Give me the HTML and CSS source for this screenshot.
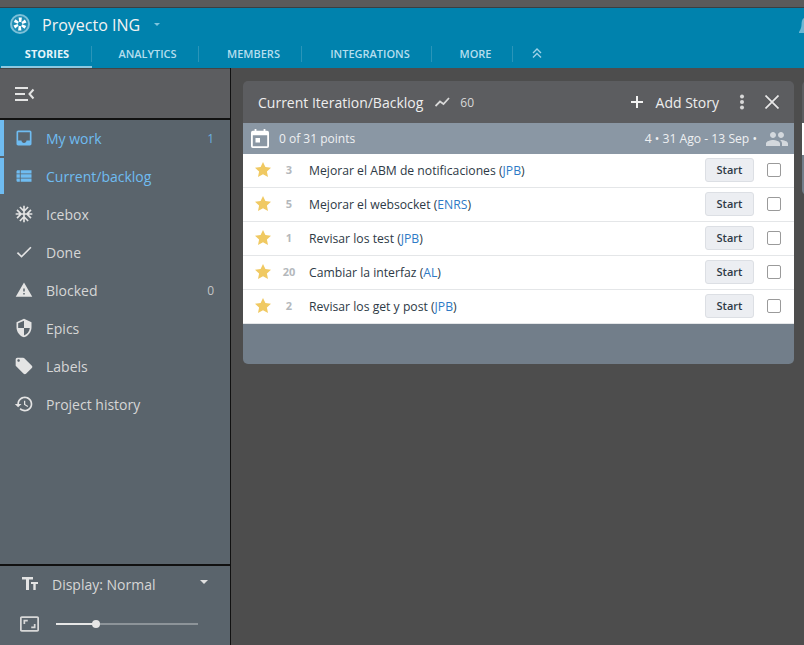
FILE: index.html
```html
<!DOCTYPE html>
<html lang="es">
<head>
<meta charset="utf-8">
<title>Proyecto ING</title>
<link rel="stylesheet" href="styles.css">
</head>
<body>
<div class="topstrip"></div>
<header class="header">
  <div class="project">
    <svg class="logo" width="20" height="20" viewBox="0 0 20 20">
      <circle cx="10" cy="10" r="9" fill="#1d8db4" stroke="#7cc0d8" stroke-width="2"/>
      <g fill="#fff">
        <path d="M8.600 3.600h3.300l-.6 4.300H9.200z"/>
        <path d="M8.600 3.600h3.300l-.6 4.300H9.200z" transform="rotate(60 10 10)"/>
        <path d="M8.600 3.600h3.300l-.6 4.300H9.200z" transform="rotate(120 10 10)"/>
        <path d="M8.600 3.600h3.300l-.6 4.300H9.200z" transform="rotate(180 10 10)"/>
        <path d="M8.600 3.600h3.300l-.6 4.300H9.200z" transform="rotate(240 10 10)"/>
        <path d="M8.600 3.600h3.300l-.6 4.300H9.200z" transform="rotate(300 10 10)"/>
      </g>
    </svg>
    <span class="project-name">Proyecto ING</span>
    <span class="caret-small"></span>
    <svg class="bell" width="5" height="15" viewBox="0 0 5 15"><path d="M5 0C3 1 2.500 4 2.500 7S1 12 0 14v1h5z" fill="#6db7d3"/></svg>
  </div>
  <nav class="tabs">
    <a class="tab tab-stories">STORIES</a>
    <a class="tab tab-analytics">ANALYTICS</a>
    <a class="tab tab-members">MEMBERS</a>
    <a class="tab tab-integrations">INTEGRATIONS</a>
    <a class="tab tab-more">MORE</a>
    <a class="tab tab-up"><svg width="10" height="10" viewBox="0 0 10 10" fill="none" stroke="#9fd3e8" stroke-width="1.400"><path d="M1 5l4-4 4 4M1 9.500l4-4 4 4"/></svg></a>
  </nav>
</header>
<div class="body">
  <aside class="sidebar">
    <div class="side-top">
      <svg width="20" height="14" viewBox="0 0 20 14" fill="#e4e4e4"><path d="M0 0h13v2H0zM0 6h10v2H0zM0 12h13v2H0z"/><path d="M18.500 2.500L14.500 7l4 4.500" fill="none" stroke="#e4e4e4" stroke-width="2"/></svg>
    </div>
    <ul class="menu">
      <li class="item active">
        <svg class="ic" viewBox="0 0 24 24"><path d="M19 3H4.990c-1.110 0-1.980.89-1.980 2L3 19c0 1.100.88 2 1.990 2H19c1.100 0 2-.9 2-2V5c0-1.110-.9-2-2-2zm0 12h-4c0 1.660-1.350 3-3 3s-3-1.340-3-3H4.990V5H19v10z"/></svg>
        <span class="label">My work</span><span class="count">1</span>
      </li>
      <li class="item active">
        <svg class="ic" viewBox="0 0 24 24"><path d="M3 6.500C3 5.700 3.700 5 4.500 5H7v4H3zM8 5h13v4H8zM3 10h4v4H3zM8 10h13v4H8zM3 15h4v4H4.500C3.700 19 3 18.300 3 17.500zM8 15h13v4H8z"/></svg>
        <span class="label">Current/backlog</span>
      </li>
      <li class="item">
        <svg class="ic" viewBox="0 0 24 24"><path d="M22 11h-4.170l3.240-3.240-1.410-1.420L15 11h-2V9l4.660-4.660-1.420-1.410L13 6.170V2h-2v4.170L7.760 2.930 6.340 4.340 11 9v2H9L4.340 6.340 2.930 7.760 6.170 11H2v2h4.170l-3.240 3.240 1.410 1.420L9 13h2v2l-4.660 4.660 1.420 1.410L11 17.830V22h2v-4.170l3.240 3.240 1.420-1.410L13 15v-2h2l4.660 4.660 1.410-1.420L17.830 13H22z"/></svg>
        <span class="label">Icebox</span>
      </li>
      <li class="item">
        <svg class="ic" viewBox="0 0 24 24"><path d="M9 16.170L4.830 12l-1.420 1.410L9 19 21 7l-1.410-1.410z"/></svg>
        <span class="label">Done</span>
      </li>
      <li class="item">
        <svg class="ic" viewBox="-1.300 -1.300 26.600 26.600"><path d="M1 21h22L12 2 1 21zm12-3h-2v-2h2v2zm0-4h-2v-4h2v4z"/></svg>
        <span class="label">Blocked</span><span class="count">0</span>
      </li>
      <li class="item">
        <svg class="ic" viewBox="0 0 24 24"><path d="M12 1L3 5v6c0 5.550 3.840 10.740 9 12 5.160-1.260 9-6.450 9-12V5l-9-4zm0 10.990h7c-.53 4.120-3.280 7.790-7 8.940V12H5V6.300l7-3.110v8.800z"/></svg>
        <span class="label">Epics</span>
      </li>
      <li class="item">
        <svg class="ic" viewBox="0 0 24 24"><path d="M21.410 11.580l-9-9C12.050 2.220 11.550 2 11 2H4c-1.100 0-2 .9-2 2v7c0 .55.22 1.050.59 1.420l9 9c.36.36.86.58 1.410.58.55 0 1.050-.22 1.410-.59l7-7c.37-.36.59-.86.59-1.410 0-.55-.23-1.060-.59-1.420zM5.500 7C4.670 7 4 6.330 4 5.500S4.670 4 5.500 4 7 4.670 7 5.500 6.330 7 5.500 7z"/></svg>
        <span class="label">Labels</span>
      </li>
      <li class="item">
        <svg class="ic" viewBox="0 0 24 24"><path d="M13 3c-4.970 0-9 4.030-9 9H1l3.890 3.890.07.14L9 12H6c0-3.870 3.130-7 7-7s7 3.130 7 7-3.130 7-7 7c-1.930 0-3.680-.79-4.940-2.060l-1.420 1.420C8.270 19.990 10.510 21 13 21c4.970 0 9-4.030 9-9s-4.030-9-9-9zm-1 5v5l4.280 2.540.72-1.210-3.500-2.080V8H12z"/></svg>
        <span class="label">Project history</span>
      </li>
    </ul>
    <div class="side-bottom">
      <div class="display-row">
        <span class="tt"><svg width="16" height="13" viewBox="0 0 16 13"><path d="M0 0h11v2.600H7V13H4V2.600H0zM9 5h7v2h-2.300v6h-2.400V7H9z"/></svg></span>
        <span class="display-label">Display: Normal</span>
        <span class="caret"></span>
      </div>
      <div class="zoom-row">
        <svg class="zoom-ic" width="19" height="16" viewBox="1 3 22 18"><path d="M19 12h-2v3h-3v2h5v-5zM7 9h3V7H5v5h2V9zm14-6H3c-1.100 0-2 .9-2 2v14c0 1.100.9 2 2 2h18c1.100 0 2-.9 2-2V5c0-1.100-.9-2-2-2zm0 16.010H3V4.990h18v14.020z"/></svg>
        <div class="slider"><span class="slider-fill"></span><span class="slider-thumb"></span></div>
      </div>
    </div>
  </aside>
  <main class="board">
    <section class="panel">
      <div class="panel-head">
        <span class="panel-title">Current Iteration/Backlog</span>
        <svg class="trend" width="15" height="10" viewBox="0 0 15 10" fill="none" stroke="#d8d8d8" stroke-width="1.800"><path d="M.5 9l4.500-4.500 3.500 2.500L14 1"/></svg>
        <span class="velocity">60</span>
        <span class="spacer"></span>
        <svg class="plus" width="14" height="14" viewBox="0 0 14 14"><path d="M6 1h2v5h5v2H8v5H6V8H1V6h5z"/></svg>
        <span class="add">Add Story</span>
        <svg class="dots" width="6" height="16" viewBox="0 0 6 16"><circle cx="3" cy="2.500" r="2"/><circle cx="3" cy="8" r="2"/><circle cx="3" cy="13.500" r="2"/></svg>
        <svg class="close" width="14" height="14" viewBox="0 0 14 14"><path d="M.5.500l13 13M13.500.500l-13 13"/></svg>
      </div>
      <div class="panel-sub">
        <svg class="cal" width="18" height="21" viewBox="0 0 20 21"><path fill-rule="evenodd" d="M4 0h2v2h8V0h2v2h2a2 2 0 0 1 2 2v15a2 2 0 0 1-2 2H2a2 2 0 0 1-2-2V4a2 2 0 0 1 2-2h2zM2 7v12h16V7zM5 10h5v5H5z"/></svg>
        <span class="points">0 of 31 points</span>
        <span class="spacer"></span>
        <span class="dates">4 • 31 Ago - 13 Sep •</span>
        <svg class="people" width="22" height="14" viewBox="1 5 22 14"><path d="M16 11c1.660 0 2.990-1.340 2.990-3S17.660 5 16 5c-1.660 0-3 1.340-3 3s1.340 3 3 3zm-8 0c1.660 0 2.990-1.340 2.990-3S9.660 5 8 5C6.340 5 5 6.340 5 8s1.340 3 3 3zm0 2c-2.330 0-7 1.170-7 3.500V19h14v-2.500c0-2.330-4.670-3.500-7-3.500zm8 0c-.29 0-.62.02-.97.05 1.160.84 1.970 1.970 1.970 3.450V19h6v-2.500c0-2.330-4.670-3.500-7-3.500z"/></svg>
      </div>
      <ul class="stories">
        <li class="story"><svg class="star" viewBox="0 0 16 15"><path d="M8 0l2.400 5 5.600.7-4.100 3.800 1.100 5.500-5-2.700-5 2.700 1.100-5.500L0 5.700 5.600 5z"/></svg><span class="est">3</span><span class="name">Mejorar el ABM de notificaciones (<a class="owner">JPB</a>)</span><button class="start">Start</button><span class="check"></span></li>
        <li class="story"><svg class="star" viewBox="0 0 16 15"><path d="M8 0l2.400 5 5.600.7-4.100 3.800 1.100 5.500-5-2.700-5 2.700 1.100-5.500L0 5.700 5.600 5z"/></svg><span class="est">5</span><span class="name">Mejorar el websocket (<a class="owner">ENRS</a>)</span><button class="start">Start</button><span class="check"></span></li>
        <li class="story"><svg class="star" viewBox="0 0 16 15"><path d="M8 0l2.400 5 5.600.7-4.100 3.800 1.100 5.500-5-2.700-5 2.700 1.100-5.500L0 5.700 5.600 5z"/></svg><span class="est">1</span><span class="name">Revisar los test (<a class="owner">JPB</a>)</span><button class="start">Start</button><span class="check"></span></li>
        <li class="story"><svg class="star" viewBox="0 0 16 15"><path d="M8 0l2.400 5 5.600.7-4.100 3.800 1.100 5.500-5-2.700-5 2.700 1.100-5.500L0 5.700 5.600 5z"/></svg><span class="est">20</span><span class="name">Cambiar la interfaz (<a class="owner">AL</a>)</span><button class="start">Start</button><span class="check"></span></li>
        <li class="story"><svg class="star" viewBox="0 0 16 15"><path d="M8 0l2.400 5 5.600.7-4.100 3.800 1.100 5.500-5-2.700-5 2.700 1.100-5.500L0 5.700 5.600 5z"/></svg><span class="est">2</span><span class="name">Revisar los get y post (<a class="owner">JPB</a>)</span><button class="start">Start</button><span class="check"></span></li>
      </ul>
      <div class="panel-foot"></div>
    </section>
    <section class="panel panel-next">
      <div class="next-head"></div>
      <div class="next-body"></div>
      <div class="panel-foot"></div>
    </section>
  </main>
</div>
</body>
</html>
```

FILE: styles.css
```css
* { box-sizing: border-box; }
html, body { margin: 0; padding: 0; height: 100%; overflow: hidden; }
body { width: 804px; height: 645px; font-family: "Open Sans", sans-serif; background: #4d4d4d; display: flex; flex-direction: column; }
ul { list-style: none; margin: 0; padding: 0; }

.topstrip { height: 8px; background: #5a5a5a; border-bottom: 1px solid #3a3f42; flex: none; }
.header { height: 60px; flex: none; background: #0082ad; display: flex; flex-direction: column; }
.project { height: 32px; display: flex; align-items: center; padding: 0 0 0 10px; position: relative; }
.logo { flex: none; }
.project-name { color: #f3f3f3; font-size: 16px; margin: 2px 0 0 12px; }
.caret-small { width: 0; height: 0; border: 3px solid transparent; border-top: 3px solid #7fc4dd; border-bottom: 0; margin-left: 14px; }
.bell { position: absolute; right: 0; top: 10px; }

.tabs { height: 28px; display: flex; align-items: flex-start; }
.tab { flex: none; display: block; height: 16px; line-height: 16px; margin-top: 6px; padding-left: 7px; font-size: 11px; font-weight: 600; color: #b5deee; text-align: center; border-right: 1px solid #2a95b9; }
.tab-stories { width: 92px; padding-left: 3px; color: #e6f4fa; font-weight: 700; position: relative; }
.tab-stories::after { content: ""; position: absolute; left: 1px; right: -1px; bottom: -6px; height: 2px; background: #8cc8e0; }
.tab-analytics { width: 107px; padding-left: 5px; }
.tab-members { width: 103px; }
.tab-integrations { width: 130px; }
.tab-more { width: 81px; }
.tab-up { width: 46px; padding-left: 1px; border-right: 0; }

.body { flex: 1; display: flex; min-height: 0; }
.sidebar { width: 231px; flex: none; background: #5a646c; border-right: 1px solid #111; display: flex; flex-direction: column; }
.side-top { height: 52px; flex: none; background: #5c5d60; border-top: 1px solid #454545; border-bottom: 2px solid #111; display: flex; align-items: center; padding-left: 15px; }
.menu { flex: 1; }
.item { height: 38px; display: flex; align-items: center; padding: 0 15px 2px 14px; color: #d6d6d6; font-size: 14px; position: relative; }
.item.active { color: #6fbcf1; }
.item.active::before { content: ""; position: absolute; left: 0; top: 0; bottom: 2px; width: 4px; background: #6fbcf1; }
.ic { width: 20px; height: 20px; flex: none; fill: #e4e4e4; }
.item.active .ic { fill: #6fbcf1; }
.label { margin-left: 12px; flex: 1; }
.count { font-size: 12px; margin-right: 1px; opacity: .85; }

.side-bottom { height: 81px; flex: none; border-top: 2px solid #111; display: flex; flex-direction: column; }
.display-row { display: flex; align-items: center; height: 37px; flex: none; padding: 0 22px; color: #d6d6d6; font-size: 14px; }
.tt { display: flex; fill: #e4e4e4; margin-top: -3px; }
.display-label { margin-left: 14px; flex: 1; }
.caret { width: 0; height: 0; border: 4px solid transparent; border-top: 4px solid #e0e0e0; border-bottom: 0; margin-top: -5px; }
.zoom-row { display: flex; align-items: center; height: 42px; flex: none; padding-left: 20px; }
.zoom-ic { fill: #d8d8d8; flex: none; }
.slider { width: 142px; height: 2px; margin-left: 17px; background: #8d9499; position: relative; }
.slider-fill { position: absolute; left: 0; top: 0; height: 2px; width: 40px; background: #e6e6e6; }
.slider-thumb { position: absolute; left: 36px; top: -3px; width: 8px; height: 8px; border-radius: 50%; background: #e6e6e6; }

.board { flex: 1; display: flex; gap: 8px; padding: 13px 0 0 12px; min-width: 0; overflow: hidden; align-items: flex-start; }
.panel { width: 551px; flex: none; border-radius: 5px; overflow: hidden; }
.panel-head { height: 42px; background: #5c5d60; display: flex; align-items: center; padding: 0 15px; color: #eee; }
.panel-title { font-size: 14px; }
.trend { margin-left: 12px; }
.velocity { font-size: 12px; color: #d8d8d8; margin-left: 10px; }
.spacer { flex: 1; }
.plus { margin-right: 12px; fill: #f2f2f2; }
.add { font-size: 14px; color: #eee; }
.dots { margin-left: 20px; fill: #d8d8d8; }
.close { margin-left: 20px; stroke: #e8e8e8; stroke-width: 1.7; }
.panel-sub { height: 31px; background: #8a97a4; display: flex; align-items: center; padding: 0 6px 0 8px; }
.cal { flex: none; fill: #fff; }
.points { font-size: 12px; color: #eef0f2; margin-left: 10px; }
.dates { font-size: 12.15px; color: #eef0f2; }
.people { margin-left: 9px; fill: #d3d8dd; }
.stories { background: #fff; }
.story { height: 34px; display: flex; align-items: center; padding: 0 13px 0 12px; border-bottom: 1px solid #e4e6e8; font-size: 12.2px; color: #2e3a46; }
.star { width: 16px; height: 15px; flex: none; fill: #f0c962; margin-bottom: 2px; }
.est { width: 24px; margin: 0 8px 2px 6px; text-align: center; font-size: 11px; font-weight: 700; color: #b4b8bc; flex: none; }
.name { flex: 1; }
.owner { color: #2e7ac6; }
.start { width: 49px; height: 24px; margin-bottom: 2px; border: 1px solid #dcdfe4; border-radius: 3px; background: #eceef2; font-family: "Open Sans", sans-serif; font-size: 11px; font-weight: 600; color: #2e3a46; padding: 0; }
.check { width: 14px; height: 14px; margin: 0 0 2px 13px; border: 1px solid #9a9a9a; border-radius: 2px; background: #fff; flex: none; }
.panel-foot { height: 40px; background: #727e8a; }
.next-head { height: 42px; background: #5c5d60; }
.next-body { height: 32px; background: #fff; }
```
